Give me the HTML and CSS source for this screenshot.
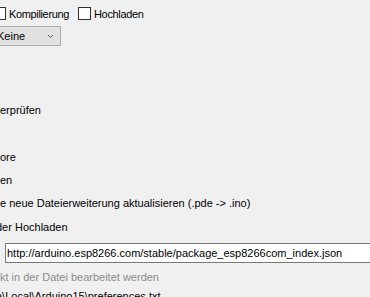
FILE: index.html
```html
<!DOCTYPE html>
<html lang="de">
<head>
    <meta charset="UTF-8">
    <title>Voreinstellungen</title>
    <link rel="stylesheet" href="styles.css">
</head>
<body>
    <div class="panel">
        <div class="row verbose">
            <span class="check first"></span>
            <span class="label">Kompilierung</span>
            <span class="check"></span>
            <span class="label">Hochladen</span>
        </div>
        <div class="row warn">
            <div class="select">
                <span>Keine</span>
                <svg width="5" height="3" viewBox="0 0 5 3"><polyline points="0,0 2.5,2.5 5,0" fill="none" stroke="#606060" stroke-width="1"/></svg>
            </div>
        </div>
        <div class="opts">
            <div class="opt"></div>
            <div class="opt"></div>
            <div class="opt">erprüfen</div>
            <div class="opt"></div>
            <div class="opt">ore</div>
            <div class="opt">en</div>
            <div class="opt">e neue Dateierweiterung aktualisieren (.pde -&gt; .ino)</div>
            <div class="opt"><span class="cut">der Hochladen</span></div>
        </div>
        <div class="urls">
            <input class="url" type="text" value="http://arduino.esp8266.com/stable/package_esp8266com_index.json">
        </div>
        <div class="note">kt in der Datei bearbeitet werden</div>
        <div class="path"><span class="cut">a\Local\Arduino15\preferences.txt</span></div>
    </div>
</body>
</html>
```

FILE: styles.css
```css
* {
    margin: 0;
    padding: 0;
    box-sizing: border-box;
}
body {
    background-color: #f0f0f0;
    font-family: "Liberation Sans", Arial, sans-serif;
    font-size: 11px;
    color: #000;
    overflow: hidden;
}
.panel {
    padding-top: 7px;
}
.row {
    display: flex;
    align-items: center;
}
.verbose {
    height: 13px;
}
.check {
    width: 13px;
    height: 13px;
    border: 1px solid #333;
    background-color: #fff;
    margin-left: 9px;
}
.check.first {
    margin-left: -7px;
}
.label {
    margin-left: 3px;
    letter-spacing: -0.35px;
}
.warn {
    margin-top: 6px;
}
.select {
    display: flex;
    align-items: center;
    justify-content: space-between;
    width: 69px;
    height: 20px;
    margin-left: -8px;
    padding: 0 7px 0 4px;
    background-color: #e1e1e1;
    border: 1px solid #adadad;
}
.opts {
    margin-top: 6px;
}
.opt {
    height: 23.4px;
    line-height: 23px;
    white-space: nowrap;
}
.cut {
    margin-left: -4px;
}
.urls {
    padding: 4px 0 0 5px;
}
.url {
    display: block;
    width: 400px;
    height: 20px;
    border: 1px solid #7a7a7a;
    background-color: #fff;
    font-family: "Liberation Sans", Arial, sans-serif;
    font-size: 11px;
    color: #000;
    padding-left: 1px;
    outline: none;
}
.note {
    color: #8c8c8c;
    margin-top: 7px;
    line-height: 14px;
}
.path {
    margin-top: 5px;
    line-height: 14px;
    white-space: nowrap;
}
```
